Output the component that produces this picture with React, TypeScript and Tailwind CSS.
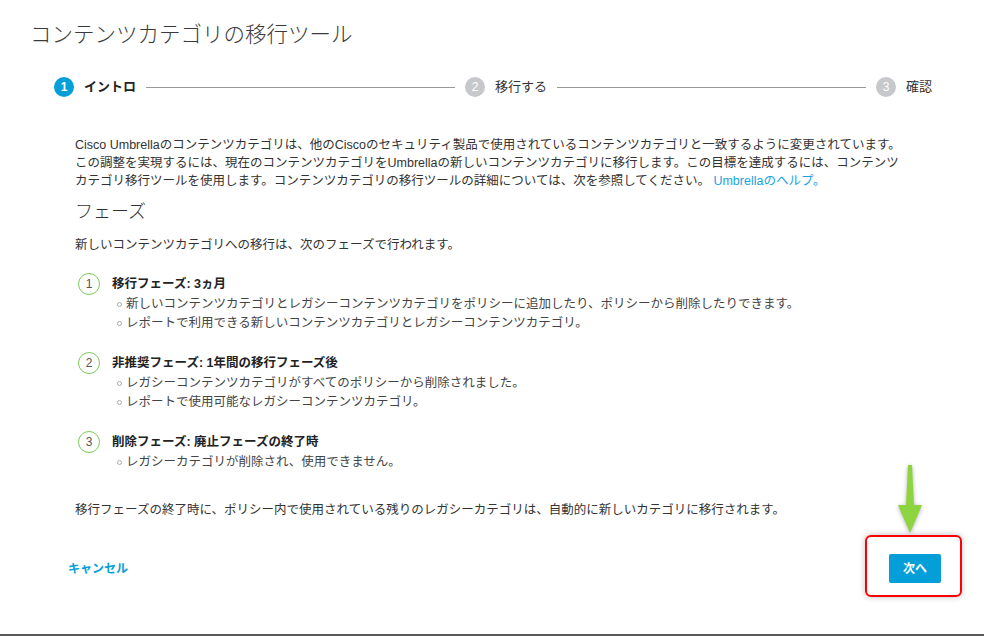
const phases = [
  {
    n: "1",
    title: "移行フェーズ: 3ヵ月",
    items: [
      "新しいコンテンツカテゴリとレガシーコンテンツカテゴリをポリシーに追加したり、ポリシーから削除したりできます。",
      "レポートで利用できる新しいコンテンツカテゴリとレガシーコンテンツカテゴリ。",
    ],
  },
  {
    n: "2",
    title: "非推奨フェーズ: 1年間の移行フェーズ後",
    items: [
      "レガシーコンテンツカテゴリがすべてのポリシーから削除されました。",
      "レポートで使用可能なレガシーコンテンツカテゴリ。",
    ],
  },
  {
    n: "3",
    title: "削除フェーズ: 廃止フェーズの終了時",
    items: ["レガシーカテゴリが削除され、使用できません。"],
  },
]

const App = () => {
  return (
    <div className="h-[636px] w-[984px] overflow-hidden bg-white font-['Liberation_Sans','Noto_Sans_CJK_JP',sans-serif] text-[#333] flex flex-col border-b-2 border-[#595959]">
      {/* Title */}
      <h1 className="pl-[30px] pt-[20px] text-[21.5px] leading-[30px] font-light text-[#3a3a3a]">
        コンテンツカテゴリの移行ツール
      </h1>

      {/* Stepper */}
      <div className="mt-[27px] pl-[54px] pr-[52px] flex items-center h-[20px]">
        <div className="w-[20px] h-[20px] rounded-full bg-[#049fd9] text-white text-[12px] font-bold flex items-center justify-center shrink-0">1</div>
        <span className="ml-[10px] text-[13px] font-bold text-[#222] shrink-0">イントロ</span>
        <div className="flex-1 h-px bg-[#999] mx-[10px]"></div>
        <div className="w-[20px] h-[20px] rounded-full bg-[#c7c8cb] text-white text-[12px] flex items-center justify-center shrink-0">2</div>
        <span className="ml-[10px] text-[13px] text-[#333] shrink-0">移行する</span>
        <div className="flex-1 h-px bg-[#999] mx-[10px]"></div>
        <div className="w-[20px] h-[20px] rounded-full bg-[#c7c8cb] text-white text-[12px] flex items-center justify-center shrink-0">3</div>
        <span className="ml-[10px] text-[13px] text-[#333] shrink-0">確認</span>
      </div>

      {/* Content */}
      <div className="pl-[75px] pr-[60px] text-[12.5px]">
        <p className="mt-[39px] leading-[18px]">
          Cisco Umbrellaのコンテンツカテゴリは、他のCiscoのセキュリティ製品で使用されているコンテンツカテゴリと一致するように変更されています。
          <br />
          この調整を実現するには、現在のコンテンツカテゴリをUmbrellaの新しいコンテンツカテゴリに移行します。この目標を達成するには、コンテンツ
          <br />
          カテゴリ移行ツールを使用します。コンテンツカテゴリの移行ツールの詳細については、次を参照してください。{" "}
          <a className="text-[#1aa3dd]">Umbrellaのヘルプ。</a>
        </p>

        <h2 className="mt-[9px] text-[18px] leading-[26px] font-light">フェーズ</h2>
        <p className="mt-[11px] leading-[18px]">新しいコンテンツカテゴリへの移行は、次のフェーズで行われます。</p>

        <div className="mt-[20px] flex flex-col gap-[20px]">
          {phases.map((p) => (
            <div key={p.n}>
              <div className="flex items-center h-[20px]">
                <div className="ml-[3px] w-[22px] h-[22px] -my-px rounded-full border-[1.5px] border-[#7cc95a] text-[#555] text-[12px] flex items-center justify-center shrink-0">
                  {p.n}
                </div>
                <span className="ml-[12px] font-bold text-[#222]">{p.title}</span>
              </div>
              <ul className="mt-[1px]">
                {p.items.map((it) => (
                  <li key={it} className="flex items-center h-[19px] pl-[42px] text-[#444]">
                    <span className="w-[5px] h-[5px] rounded-full border border-[#aaa] shrink-0"></span>
                    <span className="ml-[4px]">{it}</span>
                  </li>
                ))}
              </ul>
            </div>
          ))}
        </div>

        <p className="mt-[29px] leading-[18px]">
          移行フェーズの終了時に、ポリシー内で使用されている残りのレガシーカテゴリは、自動的に新しいカテゴリに移行されます。
        </p>
      </div>

      {/* Footer */}
      <div className="mt-[35px] pl-[68px] pr-[43px] flex items-center justify-between">
        <a className="text-[12px] font-bold text-[#049fd9]">キャンセル</a>
        <div className="relative">
          <button className="w-[52px] h-[29px] bg-[#049fd9] text-white text-[12px] font-bold rounded-[2px]">次へ</button>
          <div className="absolute -left-[24px] -right-[21px] -top-[19px] -bottom-[14px] border-2 border-[#f00] rounded-[6px] shadow-[0_0_6px_rgba(0,0,0,0.25)] pointer-events-none"></div>
          <svg className="absolute left-[9px] -top-[89px] drop-shadow-[0_1px_2px_rgba(0,0,0,0.3)]" width="24" height="68" viewBox="0 0 24 68">
            <path d="M10 0 H14 L16 40 H24 L12 68 L0 40 H8 Z" fill="#8ed43e" />
          </svg>
        </div>
      </div>
    </div>
  )
}

export default App
